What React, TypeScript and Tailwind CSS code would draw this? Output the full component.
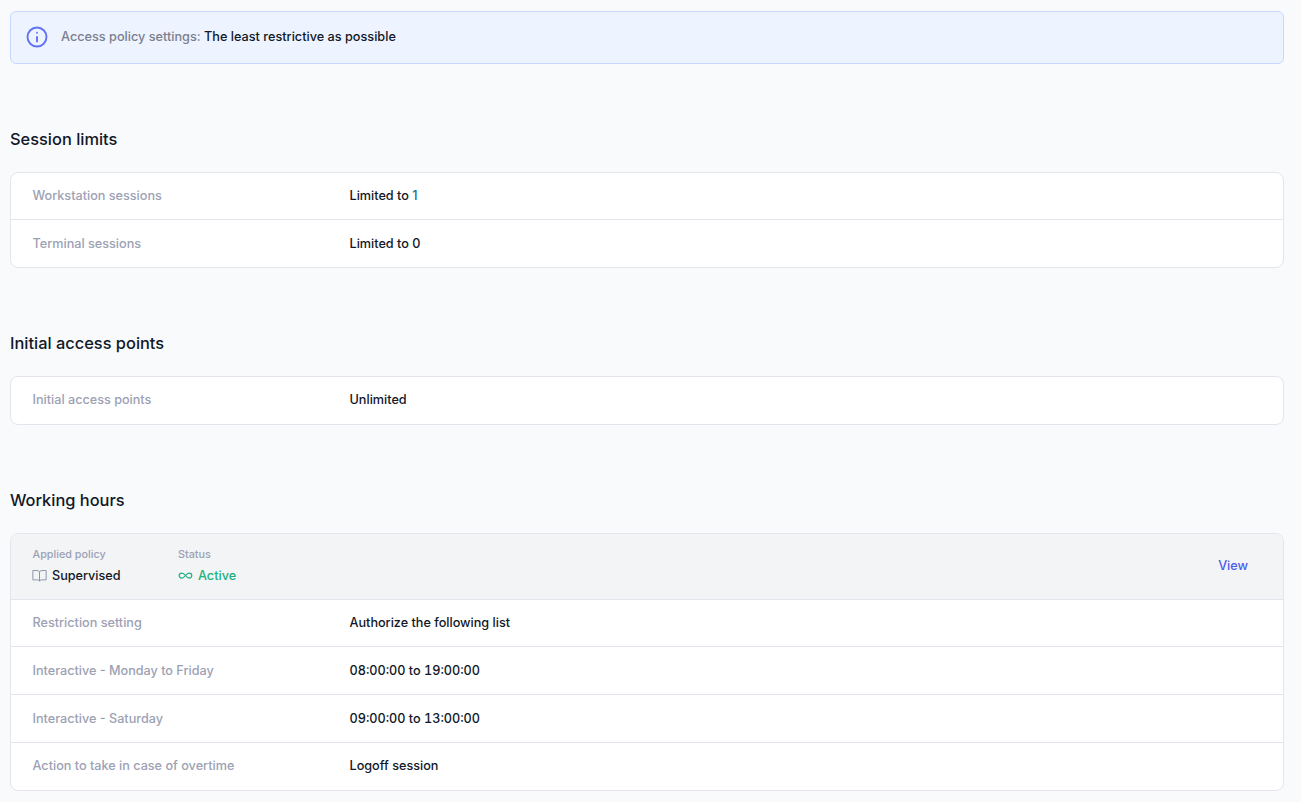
const font = "font-['Inter',sans-serif]";

function Row({ label, value, last, short, nudge }: { label: string; value: React.ReactNode; last?: boolean; short?: boolean; nudge?: boolean }) {
  return (
    <div className={`flex items-center ${nudge ? "pt-[2px]" : ""} ${short ? "h-[47px]" : last ? "h-[47px]" : "h-[48px]"} ${last ? "" : "border-b border-[#e3e5ec]"}`}>
      <div className="w-[338.5px] pl-[21.5px] text-[12.65px] font-medium text-[#9ca1b4]">{label}</div>
      <div className="text-[12.65px] font-medium text-[#111827]">{value}</div>
    </div>
  );
}

function Card({ children }: { children: React.ReactNode }) {
  return <div className="bg-white border border-[#e3e5ec] rounded-lg overflow-hidden">{children}</div>;
}

function Title({ children }: { children: React.ReactNode }) {
  return <h2 className="text-[16.4px] leading-[24px] font-medium text-[#111827]">{children}</h2>;
}

export default function App() {
  return (
    <div className={`${font} min-h-[802px] bg-[#f9fafc] pl-[10px] pr-[17px] pt-[11px] flex flex-col overflow-hidden`}>
      <div className="h-[53px] flex items-center border border-[#c7d7fe] rounded-md bg-[#edf3ff] pl-[13.5px]">
        <svg className="-mt-[1px]" width="24" height="24" viewBox="0 0 24 24" fill="none" stroke="#6172f3" strokeWidth="1.9" strokeLinecap="round"><circle cx="12" cy="12" r="9.5"/><path d="M12 16.5v-4.5M12 7.8h.01"/></svg>
        <span className="ml-[12.5px] -mt-[1px] text-[12.7px] font-medium text-[#7a7f8e]">Access policy settings: <span className="text-[#111827]">The least restrictive as possible</span></span>
      </div>
      <div className="mt-[63px]"><Title>Session limits</Title></div>
      <div className="mt-[21px]"><Card>
        <Row label="Workstation sessions" value={<>Limited to <span className="text-[#0e7490]">1</span></>} short />
        <Row label="Terminal sessions" value="Limited to 0" last nudge />
      </Card></div>
      <div className="mt-[63px]"><Title>Initial access points</Title></div>
      <div className="mt-[21px]"><Card>
        <Row label="Initial access points" value="Unlimited" last />
      </Card></div>
      <div className="mt-[63px]"><Title>Working hours</Title></div>
      <div className="mt-[21px]"><Card>
        <div className="h-[66px] bg-[#f3f4f6] border-b border-[#e3e5ec] flex items-center pl-[21.5px] pr-[35px]">
          <div className="w-[146px] mb-[2px]">
            <div className="text-[10.8px] font-medium text-[#9ca1b4] leading-[16px]">Applied policy</div>
            <div className="flex items-center gap-[5px] mt-[3px] text-[12.65px] font-medium text-[#111827] leading-[19px]">
              <svg className="-ml-[0.5px]" width="15" height="15" viewBox="0 0 24 24" fill="none" stroke="#8b93a3" strokeWidth="1.5" strokeLinecap="round" strokeLinejoin="round"><path d="M2 4h6a4 4 0 0 1 4 3v14a3 3 0 0 0-3-2H2zM22 4h-6a4 4 0 0 0-4 3v14a3 3 0 0 1 3-2h7z"/></svg>
              Supervised
            </div>
          </div>
          <div className="-ml-[0.5px] mb-[2px]">
            <div className="text-[10.8px] font-medium text-[#9ca1b4] leading-[16px]">Status</div>
            <div className="flex items-center gap-[5px] mt-[3px] text-[12.65px] font-medium text-[#21b07c] leading-[19px]">
              <svg width="15" height="15" viewBox="0 0 24 24" fill="none" stroke="#21b07c" strokeWidth="2" strokeLinecap="round"><path d="M12 12c-2-2.67-4-4-6-4a4 4 0 1 0 0 8c2 0 4-1.33 6-4zm0 0c2 2.67 4 4 6 4a4 4 0 0 0 0-8c-2 0-4 1.33-6 4z"/></svg>
              Active
            </div>
          </div>
          <div className="ml-auto text-[12.65px] font-medium text-[#4a5ceb]">View</div>
        </div>
        <Row label="Restriction setting" value="Authorize the following list" short />
        <Row label="Interactive - Monday to Friday" value={<span className="tabular-nums">08:00:00 to 19:00:00</span>} nudge />
        <Row label="Interactive - Saturday" value={<span className="tabular-nums">09:00:00 to 13:00:00</span>} nudge />
        <Row label="Action to take in case of overtime" value="Logoff session" last />
      </Card></div>
    </div>
  );
}
